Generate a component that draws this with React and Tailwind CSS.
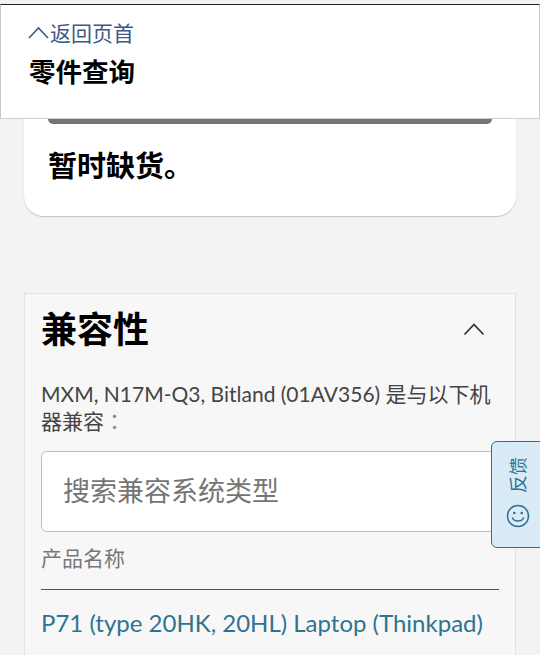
export default function App() {
  const font = "font-['Lato','Noto_Sans_CJK_SC',sans-serif]";

  return (
    <div className={"relative h-[655px] w-[540px] overflow-hidden bg-[#f3f3f3] " + font}>
      {/* Sticky header */}
      <div className="absolute left-0 right-0 top-[4px] z-10 h-[115px] border-x border-b border-x-[#c8c8c8] border-b-[#cfcfcf] border-t-[1.5px] border-t-[#222] bg-white px-[28px] pt-[15px]">
        <div className="flex h-[26px] items-center text-[21px] leading-[26px] text-[#3d5a86]">
          <svg className="-ml-[1px]" width="22" height="14" viewBox="0 0 22 14" fill="none" stroke="#3d5a86" strokeWidth="1.6">
            <path d="M1 12 L10.5 2 L20 12" />
          </svg>
          <span>返回页首</span>
        </div>
        <div className="mt-[8px] text-[26.5px] font-bold leading-[36px] text-black">零件查询</div>
      </div>

      {/* Stock card */}
      <div className="mx-[24px] mt-[118px] h-[98px] rounded-b-[20px] bg-white px-[24px] shadow-[0_1px_1px_rgba(0,0,0,0.2)]">
        <div className="h-[6px] rounded-b-[5px] bg-[#757575]" />
        <div className="mt-[23px] text-[29px] font-bold leading-[38px] text-black">暂时缺货。</div>
      </div>

      {/* Compatibility */}
      <div className="mx-[24px] mt-[77px] h-[400px] border border-[#e2e2e2] bg-[#f7f7f7] pl-[16px] pr-[16px] pt-[12px]">
        <div className="flex items-center justify-between">
          <h2 className="text-[36px] font-bold leading-[46px] text-black">兼容性</h2>
          <svg className="mr-[14px]" width="22" height="14" viewBox="0 0 22 14" fill="none" stroke="#333" strokeWidth="1.8">
            <path d="M1.5 12.5 L11 2.5 L20.5 12.5" />
          </svg>
        </div>
        <p className="mt-[29px] pr-[6px] text-[21px] leading-[26px] text-[#444]">
          MXM, N17M-Q3, Bitland (01AV356) 是与以下机器兼容
          <span className="font-['Noto_Sans_CJK_TC',sans-serif] text-[#888]">：</span>
        </p>
        <div className="mt-[17px] flex h-[81px] items-center rounded-[6px] border border-[#bdbdbd] bg-white pl-[21px] text-[27px] text-[#757575]">
          搜索兼容系统类型
        </div>
        <div className="mt-[12px] border-b border-[#555] pb-[17px] text-[21px] leading-[28px] text-[#777]">产品名称</div>
        <div className="mt-[17px] text-[24px] leading-[32px] text-[#2f7391]">P71 (type 20HK, 20HL) Laptop (Thinkpad)</div>
      </div>

      {/* Feedback tab */}
      <div className="absolute left-[491px] top-[441px] z-20 flex h-[107px] w-[60px] flex-col items-start rounded-[6px] border border-[#2f6f8f] bg-[#d8ebf6] pl-[14px] pt-[15px] text-[#2f7391]">
        <span className="rotate-180 text-[18px] leading-[24px] [text-orientation:sideways] [writing-mode:vertical-rl]">反馈</span>
        <svg className="mt-[11px]" width="24" height="24" viewBox="0 0 24 24" fill="none" stroke="#2f7391" strokeWidth="1.5" strokeLinecap="round">
          <circle cx="12" cy="12" r="10.5" />
          <path d="M6.5 14 C8 18, 16 18, 17.5 14" />
          <circle cx="8.3" cy="9" r="0.6" fill="#2f7391" />
          <circle cx="15.7" cy="9" r="0.6" fill="#2f7391" />
        </svg>
      </div>
    </div>
  );
}
